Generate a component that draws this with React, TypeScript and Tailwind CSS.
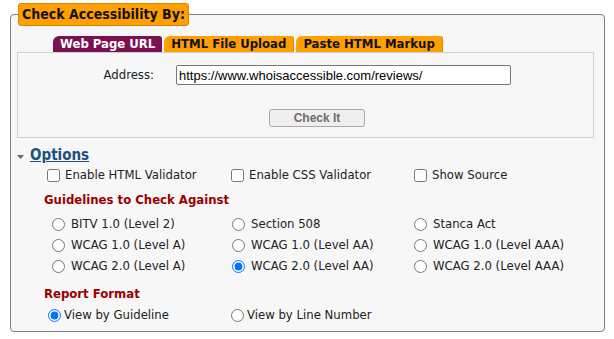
import { useState } from "react";

const guidelines = [
  "BITV 1.0 (Level 2)",
  "Section 508",
  "Stanca Act",
  "WCAG 1.0 (Level A)",
  "WCAG 1.0 (Level AA)",
  "WCAG 1.0 (Level AAA)",
  "WCAG 2.0 (Level A)",
  "WCAG 2.0 (Level AA)",
  "WCAG 2.0 (Level AAA)",
];

const tabs = ["Web Page URL", "HTML File Upload", "Paste HTML Markup"];

export default function App() {
  const [tab, setTab] = useState(0);
  const [guideline, setGuideline] = useState("WCAG 2.0 (Level AA)");
  const [format, setFormat] = useState("guideline");
  const [url, setUrl] = useState("https://www.whoisaccessible.com/reviews/");

  return (
    <div
      className="min-h-[339px] bg-white pl-[10px] pt-[3px] text-[13px] text-[#222]"
      style={{ fontFamily: '"DejaVu Sans Condensed", "DejaVu Sans", sans-serif' }}
    >
      <fieldset className="w-[595px] h-[329px] rounded-[4px] border border-[#7b8088] bg-[#f7f7f7] px-[6px]">
        <legend className="ml-px h-[23px] rounded-[3px] border border-[#d58700] bg-[#ffa000] px-[3px] text-[14px] font-bold leading-[21px] text-[#111]">
          Check Accessibility By:
        </legend>

        {/* tabs */}
        <div className="mt-[10px] flex items-end pl-[36px]">
          {tabs.map((t, i) => (
            <button
              key={t}
              type="button"
              onClick={() => setTab(i)}
              className={`mr-[2px] h-[16px] rounded-tl-[6px] rounded-tr-[3px] px-[7px] text-[13px] font-bold leading-[16px] ${
                tab === i
                  ? "bg-[#7b1150] text-white"
                  : "border-r border-[#e08a00] bg-[#ffa000] text-[#111]"
              }`}
            >
              {t}
            </button>
          ))}
        </div>

        <div className="h-[86px] w-[577px] border border-[#cfcfcf] bg-[#f7f7f7]">
          <div className="mt-[12px] flex items-center">
            <label className="w-[136px] text-right">Address:</label>
            <input
              value={url}
              onChange={(e) => setUrl(e.target.value)}
              className="ml-[22px] h-[20px] w-[335px] rounded-[2px] border border-[#767676] bg-white px-[2px] text-[13px] text-black"
              style={{ fontFamily: '"Liberation Sans", Arial, sans-serif' }}
            />
          </div>
          <div className="mt-[23px] pl-[251px]">
            <button
              type="button"
              disabled
              className="h-[18px] w-[96px] rounded-[3px] border border-[#a9a9a9] bg-[#efefef] text-[12px] font-bold leading-[16px] text-[#6d6d6d]"
              style={{ fontFamily: '"Liberation Sans", Arial, sans-serif' }}
            >
              Check It
            </button>
          </div>
        </div>

        {/* options */}
        <div className="mt-[7px] flex items-center">
          <svg width="7" height="4" viewBox="0 0 7 4" className="mr-[6px] mt-[3px]">
            <path d="M0 0h7L3.5 4z" fill="#666" />
          </svg>
          <a href="#" className="text-[15px] font-bold leading-[20px] text-[#1c4f82] underline">
            Options
          </a>
        </div>

        <div className="ml-[30px] mt-[2px] grid grid-cols-[184px_183px_160px] items-center">
          {["Enable HTML Validator", "Enable CSS Validator", "Show Source"].map((c) => (
            <label key={c} className="flex items-center gap-[5px] leading-[16px]">
              <input type="checkbox" className="m-0 h-[13px] w-[13px]" />
              {c}
            </label>
          ))}
        </div>

        <h3 className="ml-[27px] mt-[8px] font-bold leading-[18px] text-[#990000]">Guidelines to Check Against</h3>

        <div className="ml-[35px] mt-[8px] grid grid-cols-[180px_182px_160px] gap-y-[7px]">
          {guidelines.map((g) => (
            <label key={g} className="flex items-center gap-[6px] leading-[14px]">
              <input
                type="radio"
                name="guideline"
                checked={guideline === g}
                onChange={() => setGuideline(g)}
                className="m-0 h-[13px] w-[13px]"
              />
              {g}
            </label>
          ))}
        </div>

        <h3 className="ml-[27px] mt-[12px] font-bold leading-[18px] text-[#990000]">Report Format</h3>

        <div className="ml-[31px] mt-[4px] grid grid-cols-[183px_200px]">
          <label className="flex items-center gap-[3px] leading-[16px]">
            <input
              type="radio"
              name="format"
              checked={format === "guideline"}
              onChange={() => setFormat("guideline")}
              className="m-0 h-[13px] w-[13px]"
            />
            View by Guideline
          </label>
          <label className="flex items-center gap-[3px] leading-[16px]">
            <input
              type="radio"
              name="format"
              checked={format === "line"}
              onChange={() => setFormat("line")}
              className="m-0 h-[13px] w-[13px]"
            />
            View by Line Number
          </label>
        </div>
      </fieldset>
    </div>
  );
}
